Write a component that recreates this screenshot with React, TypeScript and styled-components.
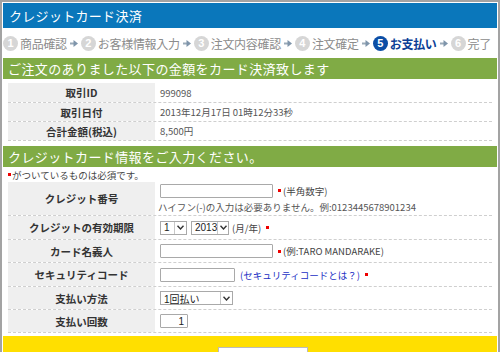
import React from "react";
import styled, { createGlobalStyle } from "styled-components";

const Global = createGlobalStyle`
  html, body { margin: 0; padding: 0; background: #fff; }
  body { font-family: "Noto Sans CJK JP", "Noto Sans", sans-serif; width: 500px; height: 352px; overflow: hidden; }
`;

const Frame = styled.div`
  width: 500px;
  height: 352px;
  box-sizing: border-box;
  border: 2px solid #a3a3a3;
  border-bottom: none;
  padding: 1px 1px 0 1px;
  overflow: hidden;
`;

const Header = styled.div`
  height: 25px;
  line-height: 25px;
  background: #0a77bb;
  color: #fff;
  font-size: 13px;
  padding-left: 6px;
  letter-spacing: 0.3px;
`;

const Steps = styled.div`
  height: 30px;
  display: flex;
  align-items: center;
  white-space: nowrap;
`;

const Step = styled.div<{ $active?: boolean }>`
  display: flex;
  align-items: center;
  font-size: 12px;
  color: ${(p) => (p.$active ? "#0c3f96" : "#8c8c8c")};
  font-weight: ${(p) => (p.$active ? 700 : 400)};
  letter-spacing: -0.3px;
  white-space: nowrap;
  flex: none;
`;

const Num = styled.span<{ $active?: boolean }>`
  width: 15px;
  height: 15px;
  border-radius: 50%;
  background: ${(p) => (p.$active ? "#0c4ea6" : "#d6d6d6")};
  color: #fff;
  font-size: 11px;
  font-weight: 700;
  display: inline-flex;
  align-items: center;
  justify-content: center;
  margin-right: 2px;
  letter-spacing: 0;
  font-family: "Liberation Sans", Arial, sans-serif;
`;

const Arrow = styled.span`
  display: inline-flex;
  flex: none;
  margin: 0 3px 0 3px;
`;

const GreenBar = styled.div<{ $mt: number }>`
  margin-top: ${(p) => p.$mt}px;
  height: 21px;
  line-height: 21px;
  background: #80ab45;
  color: #fff;
  font-size: 13px;
  padding-left: 5px;
  letter-spacing: 0.4px;
`;

const Table = styled.div<{ $mt: number }>`
  margin: ${(p) => p.$mt}px 5px 0 5px;
`;

const Row = styled.div<{ $h: number }>`
  display: flex;
  height: ${(p) => p.$h}px;
  border-bottom: 1px dashed #cfcfcf;
  box-sizing: border-box;
`;

const Label = styled.div`
  width: 147px;
  flex: none;
  background: #efefef;
  display: flex;
  align-items: center;
  justify-content: center;
  font-size: 10.5px;
  font-weight: 700;
  color: #333;
`;

const Value = styled.div`
  flex: 1;
  display: flex;
  align-items: center;
  padding-left: 5px;
  font-size: 9.5px;
  color: #555;
`;

const FieldCell = styled.div`
  flex: 1;
  display: flex;
  flex-direction: column;
  justify-content: center;
  padding-left: 5px;
  font-size: 9.5px;
  color: #444;
`;

const Line = styled.div`
  display: flex;
  align-items: center;
`;

const Input = styled.div<{ $w: number; $right?: boolean }>`
  width: ${(p) => p.$w}px;
  height: 14px;
  box-sizing: border-box;
  border: 1px solid #a9a9a9;
  border-radius: 1px;
  background: #fff;
  font-size: 10px;
  color: #222;
  display: flex;
  align-items: center;
  justify-content: ${(p) => (p.$right ? "flex-end" : "flex-start")};
  padding: 0 3px;
  font-family: "Liberation Sans", Arial, sans-serif;
`;

const Select = styled.div<{ $w: number }>`
  width: ${(p) => p.$w}px;
  height: 14px;
  box-sizing: border-box;
  border: 1px solid #a9a9a9;
  background: #fff;
  display: flex;
  align-items: center;
  justify-content: space-between;
  padding-left: 3px;
  font-size: 10px;
  color: #222;
  font-family: "Liberation Sans", "Noto Sans CJK JP", Arial, sans-serif;
`;

const Caret = styled.span`
  width: 11px;
  height: 12px;
  border-left: 1px solid #c8c8c8;
  display: flex;
  align-items: center;
  justify-content: center;
`;

const Req = styled.span`
  display: inline-block;
  width: 3px;
  height: 3px;
  background: #e00;
  margin: 0 2px 0 5px;
`;

const Hint = styled.span`
  font-size: 9.5px;
  color: #444;
`;

const Link = styled.span`
  font-size: 9.5px;
  color: #1b2fc4;
  margin-left: 5px;
`;

const Note = styled.div`
  height: 15px;
  display: flex;
  align-items: center;
  padding-left: 5px;
  font-size: 9.5px;
  color: #444;
`;

const NoteReq = styled.span`
  display: inline-block;
  width: 3px;
  height: 3px;
  background: #e00;
  margin-right: 1px;
`;

const Gap = styled.span<{ $w: number }>`
  display: inline-block;
  width: ${(p) => p.$w}px;
`;

const Sub = styled.div`
  margin-top: 2px;
  font-size: 9.5px;
  color: #555;
  margin-left: -2px;
`;

const Yellow = styled.div`
  margin-top: 3px;
  height: 30px;
  background: #ffdf00;
  display: flex;
  justify-content: flex-start;
  padding-left: 215px;
  padding-top: 11px;
  box-sizing: border-box;
`;

const Btn = styled.div`
  width: 90px;
  height: 20px;
  background: #fff;
  border: 1px solid #bbb;
  box-sizing: border-box;
`;

const StepArrow = () => (
  <Arrow>
    <svg width="8" height="7" viewBox="0 0 8 7">
      <rect x="0" y="2.5" width="4" height="2" fill="#9aaab8" />
      <path d="M3.5 0 L8 3.5 L3.5 7 Z" fill="#7f95ab" />
    </svg>
  </Arrow>
);

const Down = () => (
  <Caret>
    <svg width="7" height="5" viewBox="0 0 7 5">
      <path d="M0.5 0.8 L3.5 4 L6.5 0.8" stroke="#333" strokeWidth="1.4" fill="none" />
    </svg>
  </Caret>
);

const steps = ["商品確認", "お客様情報入力", "注文内容確認", "注文確定", "お支払い", "完了"];

export default function App() {
  return (
    <>
      <Global />
      <Frame>
        <Header>クレジットカード決済</Header>
        <Steps>
          {steps.map((s, i) => (
            <React.Fragment key={s}>
              <Step $active={i === 4}>
                <Num $active={i === 4}>{i + 1}</Num>
                {s}
              </Step>
              {i < steps.length - 1 && <StepArrow />}
            </React.Fragment>
          ))}
        </Steps>
        <GreenBar $mt={0}>ご注文のありました以下の金額をカード決済致します</GreenBar>
        <Table $mt={4}>
          <Row $h={20}>
            <Label>取引ID</Label>
            <Value>999098</Value>
          </Row>
          <Row $h={19}>
            <Label>取引日付</Label>
            <Value>2013年12月17日 01時12分33秒</Value>
          </Row>
          <Row $h={19}>
            <Label>合計金額(税込)</Label>
            <Value>8,500円</Value>
          </Row>
        </Table>
        <GreenBar $mt={5}>クレジットカード情報をご入力ください。</GreenBar>
        <Note>
          <NoteReq />
          がついているものは必須です。
        </Note>
        <Table $mt={0}>
          <Row $h={34}>
            <Label>クレジット番号</Label>
            <FieldCell>
              <Line>
                <Input $w={113} />
                <Req />
                <Hint>(半角数字)</Hint>
              </Line>
              <Sub>ハイフン(-)の入力は必要ありません。例:0123445678901234</Sub>
            </FieldCell>
          </Row>
          <Row $h={24}>
            <Label>クレジットの有効期限</Label>
            <FieldCell>
              <Line>
                <Select $w={27}>
                  1<Down />
                </Select>
                <Gap $w={4} />
                <Select $w={38}>
                  2013<Down />
                </Select>
                <Gap $w={3} />
                <Hint>(月/年)</Hint>
                <Req />
              </Line>
            </FieldCell>
          </Row>
          <Row $h={23}>
            <Label>カード名義人</Label>
            <FieldCell>
              <Line>
                <Input $w={113} />
                <Req />
                <Hint>(例:TARO MANDARAKE)</Hint>
              </Line>
            </FieldCell>
          </Row>
          <Row $h={24}>
            <Label>セキュリティコード</Label>
            <FieldCell>
              <Line>
                <Input $w={75} />
                <Link>(セキュリティコードとは？)</Link>
                <Req />
              </Line>
            </FieldCell>
          </Row>
          <Row $h={23}>
            <Label>支払い方法</Label>
            <FieldCell>
              <Line>
                <Select $w={73}>
                  1回払い<Down />
                </Select>
              </Line>
            </FieldCell>
          </Row>
          <Row $h={23}>
            <Label>支払い回数</Label>
            <FieldCell>
              <Line>
                <Input $w={28} $right>
                  1
                </Input>
              </Line>
            </FieldCell>
          </Row>
        </Table>
        <Yellow>
          <Btn />
        </Yellow>
      </Frame>
    </>
  );
}
